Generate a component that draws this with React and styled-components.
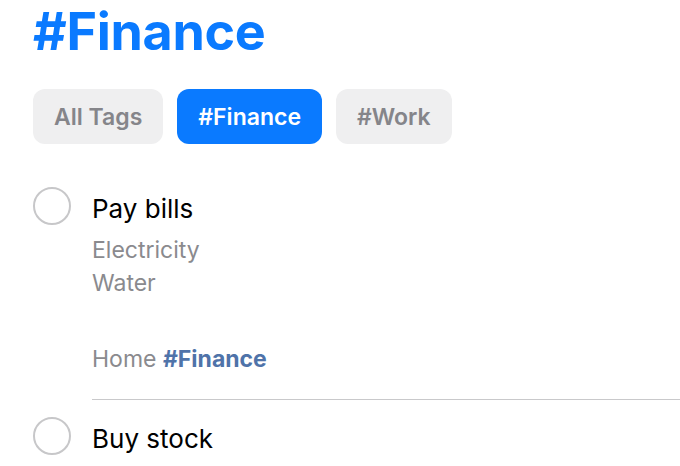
import React from 'react';
import styled, { createGlobalStyle } from 'styled-components';

const GlobalStyle = createGlobalStyle`
  html, body {
    margin: 0;
    padding: 0;
    background: #ffffff;
  }
  body {
    font-family: Inter, "Noto Sans", "Liberation Sans", sans-serif;
    -webkit-font-smoothing: antialiased;
  }
`;

const tags = ['All Tags', '#Finance', '#Work'];

const tasks = [
  {
    title: 'Pay bills',
    notes: ['Electricity', 'Water'],
    list: 'Home',
    tag: '#Finance',
  },
  { title: 'Buy stock' },
];

const Page = styled.div`
  width: 680px;
  height: 466px;
  overflow: hidden;
  padding-left: 33px;
  box-sizing: border-box;
`;

const Title = styled.h1`
  margin: 0;
  padding-top: 1px;
  font-size: 52px;
  line-height: 62px;
  font-weight: 700;
  letter-spacing: -0.3px;
  color: #0a7aff;
`;

const TagBar = styled.div`
  display: flex;
  gap: 14px;
  margin-top: 26px;
`;

const Chip = styled.button`
  height: 55px;
  padding: 0 21px;
  border: none;
  border-radius: 12px;
  font-family: inherit;
  font-size: 23px;
  font-weight: 600;
  background: ${(props) => (props.$active ? '#0a7aff' : '#efeff0')};
  color: ${(props) => (props.$active ? '#ffffff' : '#85858a')};
`;

const TaskList = styled.div`
  margin-top: 43px;
`;

const TaskRow = styled.div`
  display: grid;
  grid-template-columns: 38px 1fr;
  column-gap: 21px;
  padding-top: ${(props) => (props.$first ? '0' : '17px')};
`;

const Check = styled.span`
  width: 38px;
  height: 38px;
  box-sizing: border-box;
  border: 2px solid #c7c7c9;
  border-radius: 50%;
`;

const Body = styled.div`
  padding-bottom: ${(props) => (props.$divider ? '23px' : '0')};
  border-bottom: ${(props) => (props.$divider ? '1px solid #c9c9cb' : 'none')};
`;

const TaskTitle = styled.div`
  margin-top: 6px;
  font-size: 26px;
  line-height: 32px;
  color: #000000;
`;

const Notes = styled.div`
  margin-top: 9px;
`;

const NoteLine = styled.div`
  font-size: 23px;
  line-height: 33px;
  color: #8a8a8e;
`;

const Meta = styled.div`
  margin-top: 43px;
  font-size: 23px;
  line-height: 33px;
  color: #8a8a8e;
`;

const TagLink = styled.span`
  font-weight: 700;
  color: #4f73a9;
`;

const App = () => {
  return (
    <Page>
      <GlobalStyle />
      <Title>#Finance</Title>
      <TagBar>
        {tags.map((tag) => (
          <Chip key={tag} $active={tag === '#Finance'}>
            {tag}
          </Chip>
        ))}
      </TagBar>
      <TaskList>
        {tasks.map((task, index) => (
          <TaskRow key={task.title} $first={index === 0}>
            <Check />
            <Body $divider={index < tasks.length - 1}>
              <TaskTitle>{task.title}</TaskTitle>
              {task.notes && (
                <Notes>
                  {task.notes.map((note) => (
                    <NoteLine key={note}>{note}</NoteLine>
                  ))}
                </Notes>
              )}
              {task.list && (
                <Meta>
                  {task.list} <TagLink>{task.tag}</TagLink>
                </Meta>
              )}
            </Body>
          </TaskRow>
        ))}
      </TaskList>
    </Page>
  );
};

export default App;
